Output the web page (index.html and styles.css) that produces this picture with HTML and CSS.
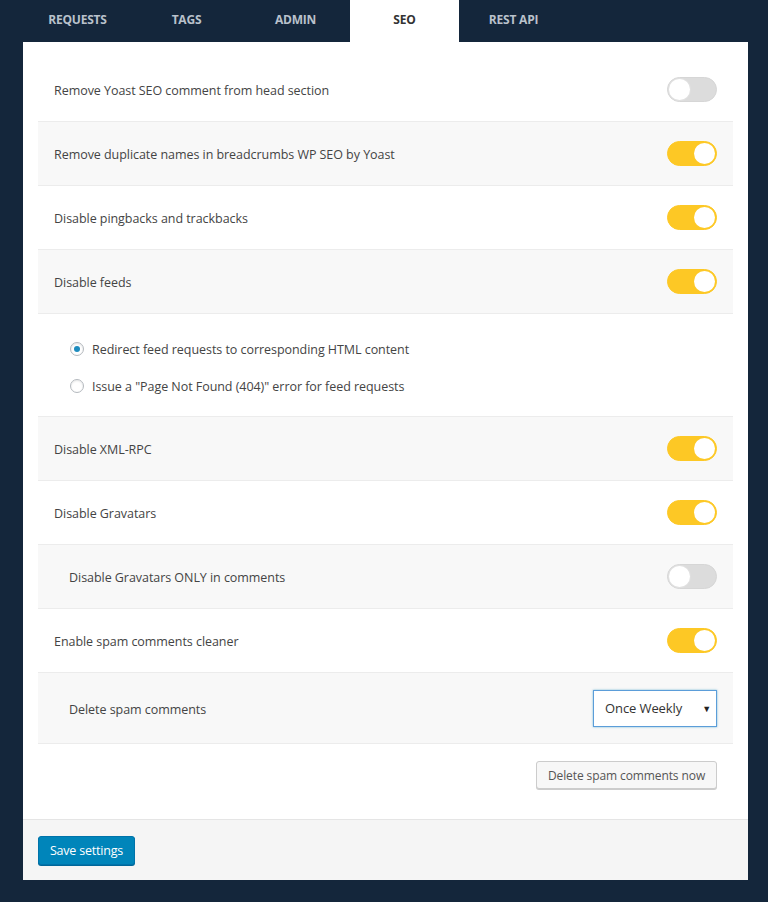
FILE: index.html
```html
<!DOCTYPE html>
<html>
<head>
<meta charset="utf-8">
<link rel="stylesheet" href="styles.css">
</head>
<body>
<div class="wrap">
  <nav class="tabs">
    <div class="tab">REQUESTS</div>
    <div class="tab">TAGS</div>
    <div class="tab">ADMIN</div>
    <div class="tab active">SEO</div>
    <div class="tab">REST API</div>
  </nav>
  <div class="panel">
    <div class="rows">
      <div class="row"><span class="label">Remove Yoast SEO comment from head section</span><span class="toggle"></span></div>
      <div class="row alt"><span class="label">Remove duplicate names in breadcrumbs WP SEO by Yoast</span><span class="toggle on"></span></div>
      <div class="row"><span class="label">Disable pingbacks and trackbacks</span><span class="toggle on"></span></div>
      <div class="row alt"><span class="label">Disable feeds</span><span class="toggle on"></span></div>
      <div class="radios">
        <div class="radio-line"><span class="radio checked"></span><span class="label">Redirect feed requests to corresponding HTML content</span></div>
        <div class="radio-line"><span class="radio"></span><span class="label">Issue a "Page Not Found (404)" error for feed requests</span></div>
      </div>
      <div class="row alt"><span class="label">Disable XML-RPC</span><span class="toggle on"></span></div>
      <div class="row"><span class="label">Disable Gravatars</span><span class="toggle on"></span></div>
      <div class="row alt sub"><span class="label">Disable Gravatars ONLY in comments</span><span class="toggle"></span></div>
      <div class="row"><span class="label">Enable spam comments cleaner</span><span class="toggle on"></span></div>
      <div class="row alt sub tall"><span class="label">Delete spam comments</span>
        <div class="select"><span>Once Weekly</span><span class="arrow">&#9660;</span></div>
      </div>
      <div class="btn-row"><button class="btn">Delete spam comments now</button></div>
    </div>
    <div class="footer"><button class="primary">Save settings</button></div>
  </div>
</div>
</body>
</html>
```
FILE: styles.css
```css
html, body { margin: 0; padding: 0; }
body {
  background: #14263b;
  font-family: "Open Sans", "Noto Sans", sans-serif;
  color: #444;
  height: 902px;
  overflow: hidden;
}
.wrap { margin-left: 23px; width: 725px; }
.tabs { display: flex; height: 42px; }
.tab {
  width: 109px;
  display: flex; align-items: center; justify-content: center;
  font-size: 12px; font-weight: 700;
  color: #b9c1cb;
  letter-spacing: -0.2px;
  padding-bottom: 3px;
  box-sizing: border-box;
}
.tab.active { background: #fff; color: #333; }
.panel { background: #fff; }
.rows { padding: 16px 15px 30px; }
.row {
  height: 64px; box-sizing: border-box;
  border-bottom: 1px solid #ececec;
  display: flex; align-items: center; justify-content: space-between;
  padding: 0 16px;
  background: #fff;
}
.row.alt { background: #f8f8f8; }
.row.sub { padding-left: 31px; }
.row.tall { height: 71px; }
.label { font-size: 12.5px; color: #444; letter-spacing: -0.05px; padding-top: 2px; }
.toggle {
  width: 50px; height: 25px; box-sizing: border-box;
  border-radius: 13px;
  background: #dcdcdc;
  border: 1px solid #d6d6d6;
  position: relative;
}
.toggle::after {
  content: ""; position: absolute;
  top: 1px; left: 1px;
  width: 21px; height: 21px; border-radius: 50%;
  background: #fff;
  box-shadow: 0 0 0 1px #e0e0e0;
}
.toggle.on { background: #fdc825; border-color: #fdc825; }
.toggle.on::after { left: auto; right: 1px; box-shadow: none; }
.radios {
  height: 103px; box-sizing: border-box;
  border-bottom: 1px solid #ececec;
  padding: 24px 0 0 32px;
  display: flex; flex-direction: column; gap: 15px;
}
.radio-line { display: flex; align-items: center; height: 22px; }
.radio-line .label { padding-top: 0; }
.radio {
  width: 14px; height: 14px; box-sizing: border-box;
  border: 1px solid #b4b9be; border-radius: 50%;
  margin-right: 8px; position: relative;
  box-shadow: inset 0 1px 2px rgba(0,0,0,0.1);
}
.radio.checked::after {
  content: ""; position: absolute; top: 3px; left: 3px;
  width: 6px; height: 6px; border-radius: 50%; background: #1e8cbe;
}
.select {
  width: 124px; height: 37px; box-sizing: border-box;
  border: 1px solid #5b9dd9;
  box-shadow: 0 0 2px rgba(30,140,190,0.6);
  background: #fff;
  display: flex; align-items: center; justify-content: space-between;
  padding: 0 5px 0 11px;
  font-size: 13px; color: #333; letter-spacing: -0.1px;
}
.arrow { font-size: 9px; color: #222; }
.btn-row { display: flex; justify-content: flex-end; padding: 17px 16px 0; }
.btn {
  height: 28px; width: 181px;
  border: 1px solid #ccc; border-radius: 3px;
  background: #f7f7f7;
  box-shadow: 0 1px 0 #ccc;
  font-family: inherit; font-size: 12px; color: #555; letter-spacing: -0.1px;
  padding: 0;
}
.footer {
  height: 61px; box-sizing: border-box;
  border-top: 1px solid #e5e5e5;
  background: #f5f5f5;
  padding: 16px 15px 0;
}
.primary {
  height: 29px; width: 97px;
  background: #0085ba; border: 1px solid #0073aa; border-radius: 3px;
  box-shadow: 0 1px 0 #006799;
  color: #fff; font-family: inherit; font-size: 12.5px; letter-spacing: -0.2px;
  padding: 0;
}
```
